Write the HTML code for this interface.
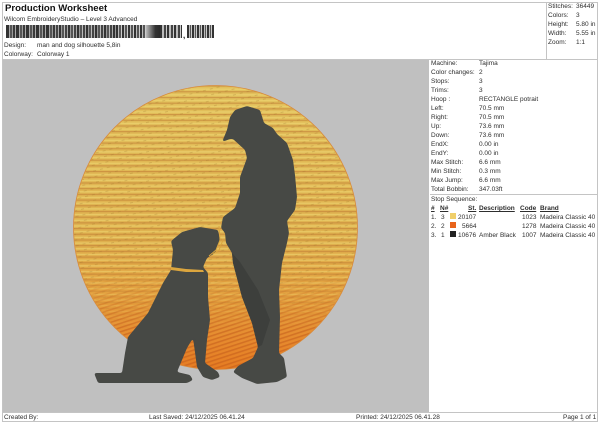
<!DOCTYPE html>
<html><head><meta charset="utf-8"><style>
html,body{margin:0;padding:0;background:#fff}
#p{position:relative;width:600px;height:424px;overflow:hidden;background:#fff;font-family:"Liberation Sans",sans-serif;font-size:6.5px;color:#2e2e2e;filter:blur(.3px)}
#p span{position:absolute;white-space:nowrap;line-height:9px;height:9px}
.l{position:absolute;background:#c4c4c4}
.u{text-decoration:underline;font-weight:bold}
.bc{position:absolute;top:25px;height:13px}
</style></head><body><div id="p">
<div class="l" style="left:2px;top:2px;width:596px;height:1px"></div>
<div class="l" style="left:2px;top:2px;width:1px;height:420px"></div>
<div class="l" style="left:597px;top:2px;width:1px;height:420px"></div>
<div class="l" style="left:2px;top:59px;width:596px;height:1px"></div>
<div class="l" style="left:546px;top:2px;width:1px;height:57px"></div>
<div class="l" style="left:430px;top:194px;width:167px;height:1px"></div>
<div class="l" style="left:2px;top:412px;width:596px;height:1px"></div>
<div class="l" style="left:2px;top:421px;width:596px;height:1px"></div>
<div style="position:absolute;left:3px;top:60px;width:426px;height:352px;background:#c0c0c0"></div>

<span style="left:5px;top:4px;font-size:9.6px;font-weight:bold;color:#111">Production Worksheet</span>
<span style="left:4px;top:15px">Wilcom EmbroideryStudio – Level 3 Advanced</span>
<div class="bc" style="left:6px;width:50px;background:repeating-linear-gradient(90deg,#333 0 3px,#aaa 3px 4px,#555 4px 6px,#999 6px 7px,#3a3a3a 7px 9px,#aaa 9px 10px)"></div>
<div class="bc" style="left:56px;width:60px;background:repeating-linear-gradient(90deg,#444 0 2px,#aaa 2px 3px,#333 3px 5px,#999 5px 6px,#555 6px 8px,#bbb 8px 9px)"></div>
<div class="bc" style="left:116px;width:30px;background:repeating-linear-gradient(90deg,#333 0 2px,#bbb 2px 3px,#555 3px 5px,#ccc 5px 6px)"></div>
<div class="bc" style="left:146px;width:14px;background:linear-gradient(90deg,#bbb,#777,#333,#2a2a2a)"></div>
<div class="bc" style="left:160px;width:22px;background:repeating-linear-gradient(90deg,#333 0 2px,#bbb 2px 4px,#444 4px 6px,#ccc 6px 7px)"></div>
<span style="left:183px;top:31px;font-weight:bold;font-size:8px;color:#111">,</span>
<div class="bc" style="left:187px;width:27px;background:repeating-linear-gradient(90deg,#333 0 2px,#bbb 2px 3px,#555 3px 4px,#ccc 4px 5px)"></div>
<span style="left:4px;top:41px">Design:</span><span style="left:37px;top:41px">man and dog silhouette 5,8in</span>
<span style="left:4px;top:50px">Colorway:</span><span style="left:37px;top:50px">Colorway 1</span>

<span style="left:548px;top:2px">Stitches:</span><span style="left:576px;top:2px">36449</span>
<span style="left:548px;top:11px">Colors:</span><span style="left:576px;top:11px">3</span>
<span style="left:548px;top:20px">Height:</span><span style="left:576px;top:20px">5.80 in</span>
<span style="left:548px;top:29px">Width:</span><span style="left:576px;top:29px">5.55 in</span>
<span style="left:548px;top:38px">Zoom:</span><span style="left:576px;top:38px">1:1</span>

<span style="left:431px;top:59px">Machine:</span><span style="left:479px;top:59px">Tajima</span>
<span style="left:431px;top:68px">Color changes:</span><span style="left:479px;top:68px">2</span>
<span style="left:431px;top:77px">Stops:</span><span style="left:479px;top:77px">3</span>
<span style="left:431px;top:86px">Trims:</span><span style="left:479px;top:86px">3</span>
<span style="left:431px;top:95px">Hoop :</span><span style="left:479px;top:95px">RECTANGLE potrait</span>
<span style="left:431px;top:104px">Left:</span><span style="left:479px;top:104px">70.5 mm</span>
<span style="left:431px;top:113px">Right:</span><span style="left:479px;top:113px">70.5 mm</span>
<span style="left:431px;top:122px">Up:</span><span style="left:479px;top:122px">73.6 mm</span>
<span style="left:431px;top:131px">Down:</span><span style="left:479px;top:131px">73.6 mm</span>
<span style="left:431px;top:140px">EndX:</span><span style="left:479px;top:140px">0.00 in</span>
<span style="left:431px;top:149px">EndY:</span><span style="left:479px;top:149px">0.00 in</span>
<span style="left:431px;top:158px">Max Stitch:</span><span style="left:479px;top:158px">6.6 mm</span>
<span style="left:431px;top:167px">Min Stitch:</span><span style="left:479px;top:167px">0.3 mm</span>
<span style="left:431px;top:176px">Max Jump:</span><span style="left:479px;top:176px">6.6 mm</span>
<span style="left:431px;top:185px">Total Bobbin:</span><span style="left:479px;top:185px">347.03ft</span>
<span style="left:431px;top:195px">Stop Sequence:</span>
<span class="u" style="left:431px;top:204px">#</span><span class="u" style="left:440px;top:204px">N#</span><span class="u" style="left:468px;top:204px">St.</span><span class="u" style="left:479px;top:204px">Description</span><span class="u" style="left:520px;top:204px">Code</span><span class="u" style="left:540px;top:204px">Brand</span>
<span style="left:431px;top:213px">1.</span><span style="left:441px;top:213px">3</span><div style="position:absolute;left:450px;top:213px;width:6px;height:6px;background:#f0cf6a"></div><span style="left:458px;top:213px">20107</span><span style="left:522px;top:213px">1023</span><span style="left:540px;top:213px">Madeira Classic 40</span>
<span style="left:431px;top:222px">2.</span><span style="left:441px;top:222px">2</span><div style="position:absolute;left:450px;top:222px;width:6px;height:6px;background:#e8641c"></div><span style="left:462px;top:222px">5664</span><span style="left:522px;top:222px">1278</span><span style="left:540px;top:222px">Madeira Classic 40</span>
<span style="left:431px;top:231px">3.</span><span style="left:441px;top:231px">1</span><div style="position:absolute;left:450px;top:231px;width:6px;height:6px;background:#222"></div><span style="left:458px;top:231px">10676</span><span style="left:479px;top:231px">Amber Black</span><span style="left:522px;top:231px">1007</span><span style="left:540px;top:231px">Madeira Classic 40</span>

<span style="left:4px;top:413px">Created By:</span>
<span style="left:149px;top:413px">Last Saved: 24/12/2025 06.41.24</span>
<span style="left:356px;top:413px">Printed: 24/12/2025 06.41.28</span>
<span style="left:563px;top:413px">Page 1 of 1</span>

<svg style="position:absolute;left:0;top:0" width="600" height="424" viewBox="0 0 600 424">
<defs>
<linearGradient id="g" x1="0" y1="86" x2="0" y2="369" gradientUnits="userSpaceOnUse">
<stop offset="0" stop-color="#e2c05c"/><stop offset=".55" stop-color="#dfb04e"/><stop offset=".75" stop-color="#e4a03e"/><stop offset=".9" stop-color="#e68a2e"/><stop offset="1" stop-color="#e67c22"/>
</linearGradient>
<pattern id="s" width="6" height="5.7" patternUnits="userSpaceOnUse"><rect y="0" width="6" height="1.2" fill="#bf7c36" opacity=".6"/><rect y="3" width="6" height="1.4" fill="#f2e07c" opacity=".5"/></pattern>
<pattern id="k" width="7" height="5.7" patternUnits="userSpaceOnUse" patternTransform="rotate(-14)"><rect width="3" height="1" fill="#a87a30" opacity=".3"/></pattern>
<pattern id="d" width="5" height="4" patternUnits="userSpaceOnUse" patternTransform="rotate(-18)"><rect width="5" height="1.6" fill="#c0581a" opacity=".5"/></pattern>
<linearGradient id="f" x1="0" y1="270" x2="0" y2="330" gradientUnits="userSpaceOnUse"><stop offset="0" stop-color="#fff" stop-opacity="0"/><stop offset="1" stop-color="#fff"/></linearGradient>
<linearGradient id="f2" x1="0" y1="270" x2="0" y2="330" gradientUnits="userSpaceOnUse"><stop offset="0" stop-color="#fff"/><stop offset="1" stop-color="#fff" stop-opacity="0"/></linearGradient>
<mask id="md"><rect x="60" y="80" width="320" height="300" fill="url(#f)"/></mask>
<mask id="mu"><rect x="60" y="80" width="320" height="300" fill="url(#f2)"/></mask>
<filter id="sm" x="-5%" y="-5%" width="110%" height="110%"><feGaussianBlur stdDeviation="1.1"/><feComponentTransfer><feFuncA type="linear" slope="6" intercept="-2.5"/></feComponentTransfer></filter>
</defs>
<circle cx="215.5" cy="227.5" r="142" fill="url(#g)" stroke="#d88a3c" stroke-width=".8"/>
<circle cx="215.5" cy="227.5" r="141.5" fill="url(#s)" mask="url(#mu)"/>
<circle cx="215.5" cy="227.5" r="141.5" fill="url(#k)" mask="url(#mu)"/>
<circle cx="215.5" cy="227.5" r="141.5" fill="url(#d)" mask="url(#md)"/>
<g filter="url(#sm)" fill="#464844">
<path d="M222 142 L227 130 L230 117 L235 110 L247 106 L260 110 L264 123 L273 128 L277 134 L287 143 L293 160 L295 175 L297 197 L295 210 L287 221 L289 233 L287 243 L282 263 L279 290 L280 317 L279 353 L284 358 L287 377 L277 382 L257 384 L242 378 L233 372 L238 366 L253 358 L258 347 L252 323 L242 297 L233 263 L232 253 L226 243 L225 233 L221 228 L223 217 L235 208 L240 193 L240 177 L247 158 L245 150 L233 139 L230 139 Z"/>
<path d="M171 241 L182 232 L200 227 L218 230 L220 240 L215 253 L207 258 L203 267 L208 273 L208 297 L210 320 L207 340 L205 363 L218 372 L220 377 L212 380 L203 377 L197 367 L193 338 L187 348 L177 372 L190 375 L193 380 L187 383 L155 383 L98 383 L94 373 L122 373 L125 353 L128 337 L148 313 L163 283 L171 270 L173 250 Z"/>
</g>
<path fill="#3d3f3c" d="M232 253 L240 262 L258 290 L270 320 L262 345 L258 347 L252 323 L242 297 L233 263 Z"/>
<path fill="#dca63e" d="M171 267 L186 269 L203 270 L204 272 L186 272 L171 270 Z"/>
<path fill="none" stroke="#dca63e" stroke-width="1" d="M219 226 L220 240 L216 250 L209 256 M223 240 L219 250 L213 254"/>
</svg>
</div></body></html>
